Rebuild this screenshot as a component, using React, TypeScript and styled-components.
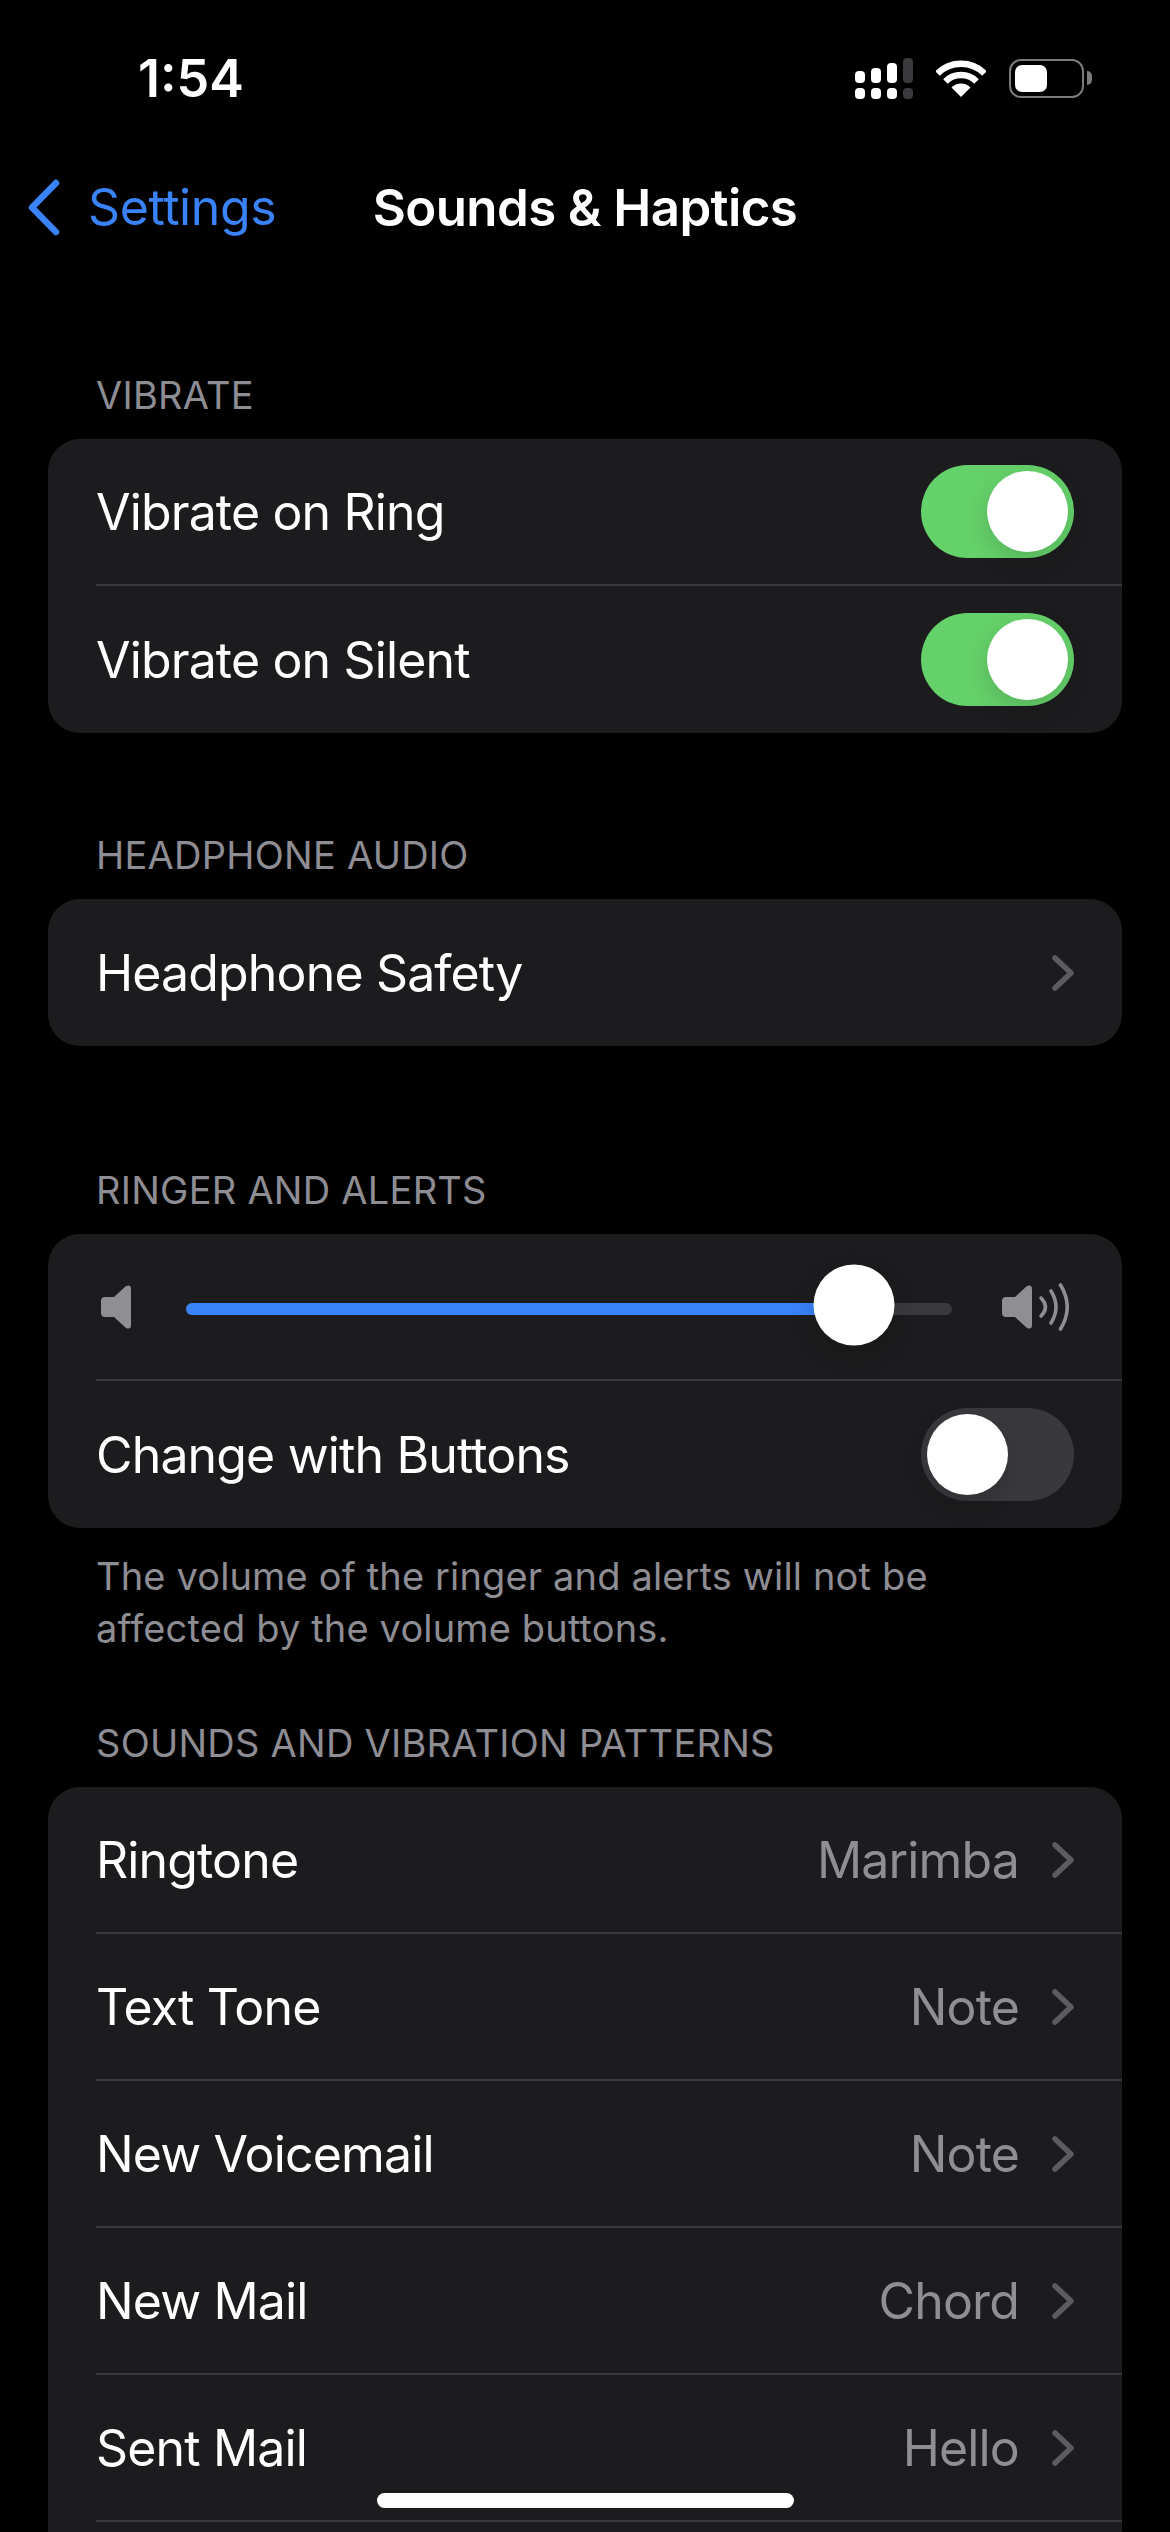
import * as React from 'react';
import styled, { createGlobalStyle } from 'styled-components';

const GlobalStyle = createGlobalStyle`
    html, body {
        margin: 0;
        padding: 0;
        background: #000;
    }
    body {
        font-family: Inter, "Liberation Sans", sans-serif;
        color: #fff;
    }
`;

const rowsBelow = [
    { label: 'Ringtone', value: 'Marimba' },
    { label: 'Text Tone', value: 'Note' },
    { label: 'New Voicemail', value: 'Note' },
    { label: 'New Mail', value: 'Chord' },
    { label: 'Sent Mail', value: 'Hello' },
];

const volume = (853.5 - 186) / (952 - 186) * 100;

const SignalIcon = () => (
    <svg width="58" height="41" viewBox="0 0 58 41">
        <rect x="0" y="13" width="10" height="12" rx="4" fill="#fff" />
        <rect x="16" y="10" width="10" height="15" rx="4" fill="#fff" />
        <rect x="32" y="5" width="10" height="20" rx="4" fill="#fff" />
        <rect x="48" y="0" width="10" height="25" rx="4" fill="#3a3a3c" />
        <rect x="0" y="30" width="10" height="11" rx="4" fill="#fff" />
        <rect x="16" y="30" width="10" height="11" rx="4" fill="#fff" />
        <rect x="32" y="30" width="10" height="11" rx="4" fill="#fff" />
        <rect x="48" y="30" width="10" height="11" rx="4" fill="#3a3a3c" />
    </svg>
);

const WifiIcon = () => (
    <svg width="50" height="37" viewBox="0 0 50 37">
        <path d="M1.5 13.5 A33.5 33.5 0 0 1 48.5 13.5" fill="none" stroke="#fff" strokeWidth="6.5" />
        <path d="M9.5 21.5 A22 22 0 0 1 40.5 21.5" fill="none" stroke="#fff" strokeWidth="6.5" />
        <path d="M25 37 L15.5 27.5 A13.4 13.4 0 0 1 34.5 27.5 Z" fill="#fff" />
    </svg>
);

const LowSpeaker = () => (
    <svg width="30" height="44" viewBox="0 0 30 44">
        <path
            d="M4 12 H13 L25 1 Q30 -1 30 4 V40 Q30 45 25 43 L13 32 H4 Q0 32 0 28 V16 Q0 12 4 12 Z"
            fill="#8e8e93"
        />
    </svg>
);

const HighSpeaker = () => (
    <svg width="67" height="48" viewBox="0 0 67 48">
        <path
            d="M4 14 H13 L25 3 Q30 1 30 6 V42 Q30 47 25 45 L13 34 H4 Q0 34 0 30 V18 Q0 14 4 14 Z"
            fill="#8e8e93"
        />
        <path d="M39 15 Q48 24 39 33" fill="none" stroke="#8e8e93" strokeWidth="3.6" strokeLinecap="round" />
        <path d="M49 8 Q59 24 49 40" fill="none" stroke="#8e8e93" strokeWidth="3.6" strokeLinecap="round" />
        <path d="M58.5 2 Q72 24 58.5 46" fill="none" stroke="#8e8e93" strokeWidth="3.6" strokeLinecap="round" />
    </svg>
);

const Chevron = () => (
    <svg width="22" height="36" viewBox="0 0 22 36">
        <path d="M3 3 L19 18 L3 33" fill="none" stroke="#5c5c60" strokeWidth="5.5" strokeLinecap="round" strokeLinejoin="round" />
    </svg>
);

const BackChevron = () => (
    <svg width="32" height="57" viewBox="0 0 32 57">
        <path d="M28 4 L4 28.5 L28 53" fill="none" stroke="#3a82f7" strokeWidth="6.5" strokeLinecap="round" strokeLinejoin="round" />
    </svg>
);

const App = () => (
    <Page>
        <GlobalStyle />
        <StatusBar>
            <Time>1:54</Time>
            <StatusIcons>
                <SignalIcon />
                <WifiIcon />
                <Battery>
                    <BatteryFill />
                    <BatteryNub />
                </Battery>
            </StatusIcons>
        </StatusBar>
        <Nav>
            <Back>
                <BackChevron />
                <BackLabel>Settings</BackLabel>
            </Back>
            <NavTitle>Sounds &amp; Haptics</NavTitle>
        </Nav>
        <Content>
            <SectionHeader>VIBRATE</SectionHeader>
            <Card>
                <Row>
                    <RowLabel>Vibrate on Ring</RowLabel>
                    <Toggle $on><Knob /></Toggle>
                </Row>
                <Row>
                    <RowLabel>Vibrate on Silent</RowLabel>
                    <Toggle $on><Knob /></Toggle>
                </Row>
            </Card>

            <SectionHeader $gap={100}>HEADPHONE AUDIO</SectionHeader>
            <Card>
                <Row>
                    <RowLabel>Headphone Safety</RowLabel>
                    <Chevron />
                </Row>
            </Card>

            <SectionHeader $gap={122}>RINGER AND ALERTS</SectionHeader>
            <Card>
                <SliderRow>
                    <LowSpeaker />
                    <Track>
                        <TrackFill style={{ width: `${volume}%` }} />
                        <SliderKnob style={{ left: `${volume}%` }} />
                    </Track>
                    <HighSpeaker />
                </SliderRow>
                <Row>
                    <RowLabel>Change with Buttons</RowLabel>
                    <Toggle><Knob /></Toggle>
                </Row>
            </Card>
            <SectionFooter>
                The volume of the ringer and alerts will not be<br />
                affected by the volume buttons.
            </SectionFooter>

            <SectionHeader $gap={67}>SOUNDS AND VIBRATION PATTERNS</SectionHeader>
            <Card>
                {rowsBelow.map(row => (
                    <Row key={row.label}>
                        <RowLabel>{row.label}</RowLabel>
                        <RowRight>
                            <RowValue>{row.value}</RowValue>
                            <Chevron />
                        </RowRight>
                    </Row>
                ))}
                <Row />
            </Card>
        </Content>
        <HomeIndicator />
    </Page>
);

export default App;

const Page = styled.div`
    position: relative;
    width: 1170px;
    height: 2532px;
    overflow: hidden;
    background: #000;
`;

const StatusBar = styled.div`
    display: flex;
    justify-content: space-between;
    align-items: center;
    height: 156px;
    padding: 0 86px 0 138px;
`;

const Time = styled.div`
    font-size: 52px;
    font-weight: 600;
`;

const StatusIcons = styled.div`
    display: flex;
    align-items: center;
    gap: 23px;
`;

const Battery = styled.div`
    position: relative;
    box-sizing: border-box;
    width: 75px;
    height: 39px;
    padding: 4px;
    border: 2.5px solid #7b7b7f;
    border-radius: 12px;
`;

const BatteryFill = styled.div`
    width: 32px;
    height: 100%;
    background: #fff;
    border-radius: 7px;
`;

const BatteryNub = styled.div`
    position: absolute;
    top: 10px;
    right: -10px;
    width: 5px;
    height: 14px;
    background: #7b7b7f;
    border-radius: 0 7px 7px 0;
`;

const Nav = styled.div`
    display: grid;
    grid-template-columns: 1fr auto 1fr;
    align-items: center;
    height: 102px;
    padding-left: 28px;
    padding-right: 28px;
`;

const Back = styled.div`
    display: flex;
    align-items: center;
    gap: 28px;
    color: #3a82f7;
`;

const BackLabel = styled.span`
    font-size: 50px;
    letter-spacing: -0.4px;
`;

const NavTitle = styled.div`
    font-size: 51px;
    font-weight: 600;
    letter-spacing: -0.6px;
`;

const Content = styled.div`
    padding: 115px 48px 0;
`;

const SectionHeader = styled.div<{ $gap?: number }>`
    margin-top: ${props => props.$gap || 0}px;
    padding: 0 48px 22px;
    font-size: 38px;
    line-height: 44px;
    letter-spacing: 0.25px;
    color: #8d8d93;
`;

const SectionFooter = styled.div`
    padding: 22px 48px 0;
    font-size: 38px;
    line-height: 52px;
    letter-spacing: 0.15px;
    color: #8d8d93;
`;

const Card = styled.div`
    background: #1c1c1e;
    border-radius: 32px;
    overflow: hidden;
    padding-left: 48px;
`;

const Row = styled.div`
    box-sizing: border-box;
    display: flex;
    justify-content: space-between;
    align-items: center;
    height: 147px;
    padding-right: 48px;
    border-bottom: 2px solid #38383a;

    &:last-child {
        border-bottom: none;
    }
`;

const SliderRow = styled(Row)`
    gap: 50px;
    padding-left: 5px;
    padding-right: 53px;
`;

const RowLabel = styled.div`
    font-size: 50px;
    letter-spacing: -0.85px;
`;

const RowRight = styled.div`
    display: flex;
    align-items: center;
    gap: 33px;
`;

const RowValue = styled.div`
    font-size: 50px;
    letter-spacing: -0.85px;
    color: #8e8e93;
`;

const Toggle = styled.div<{ $on?: boolean }>`
    display: flex;
    justify-content: ${props => (props.$on ? 'flex-end' : 'flex-start')};
    align-items: center;
    box-sizing: border-box;
    width: 153px;
    height: 93px;
    padding: 0 6px;
    border-radius: 47px;
    background: ${props => (props.$on ? '#65d16a' : '#39393d')};
`;

const Knob = styled.div`
    width: 81px;
    height: 81px;
    border-radius: 50%;
    background: #fff;
    box-shadow: 0 9px 24px rgba(0, 0, 0, 0.15);
`;

const Track = styled.div`
    position: relative;
    flex: 1;
    height: 12px;
    margin-top: 4px;
    margin-left: 5px;
    border-radius: 6px;
    background: #3a3a3e;
`;

const TrackFill = styled.div`
    height: 100%;
    border-radius: 6px;
    background: #3a82f7;
`;

const SliderKnob = styled.div`
    position: absolute;
    top: 2px;
    width: 81px;
    height: 81px;
    border-radius: 50%;
    background: #fff;
    transform: translate(-50%, -50%);
    box-shadow: 0 9px 24px rgba(0, 0, 0, 0.15);
`;

const HomeIndicator = styled.div`
    position: absolute;
    left: 377px;
    bottom: 24px;
    width: 417px;
    height: 15px;
    border-radius: 8px;
    background: #fff;
`;
